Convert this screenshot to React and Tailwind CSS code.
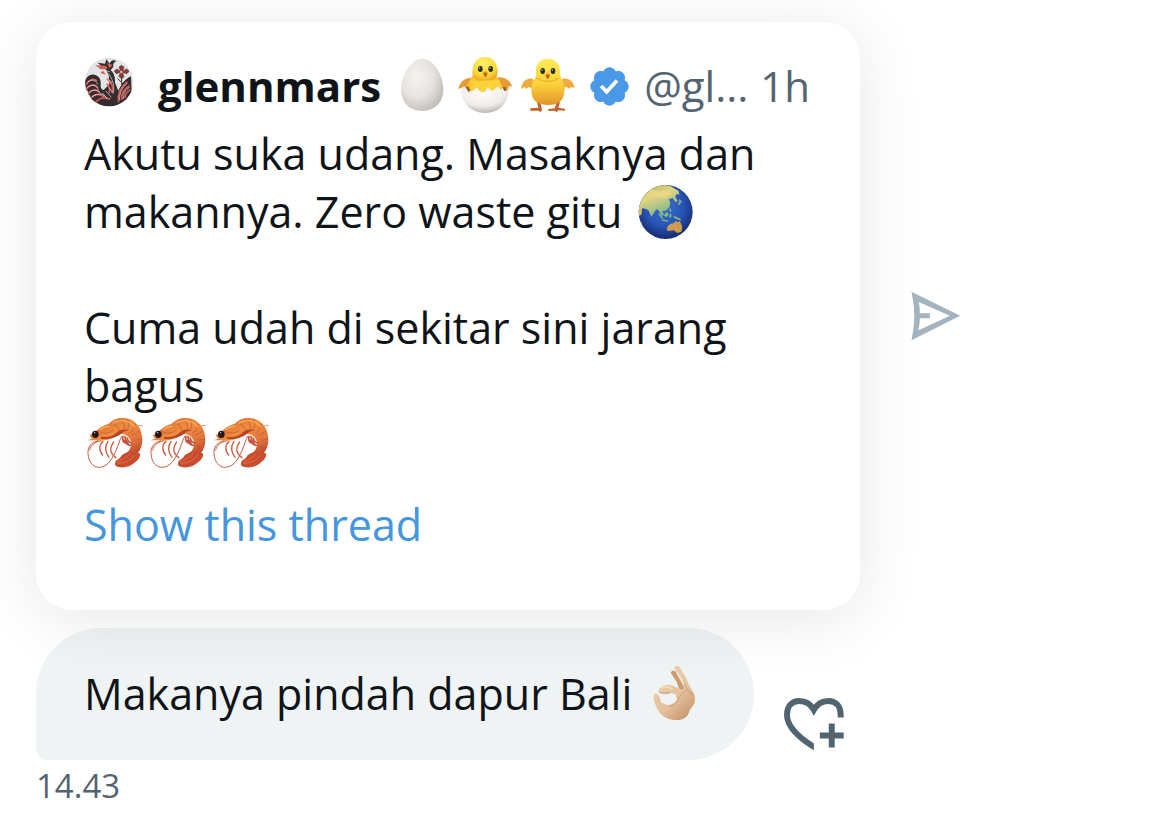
const threadText = [
    'Akutu suka udang. Masaknya dan',
    'makannya. Zero waste gitu',
];

export default function App() {
    return (
        <main className="min-h-screen bg-white px-9 pt-[22px] font-['Open_Sans',sans-serif] text-[43px] leading-[58px] font-medium text-[#0f1419]">
            <div className="flex items-center">
                <QuotedPost />
                <button type="button" aria-label="Send post" className="ml-[51px] shrink-0">
                    <SendIcon />
                </button>
            </div>

            <div className="mt-[18px] flex items-end">
                <p className="rounded-[66px] rounded-bl-xl bg-[#eff3f4] px-12 py-[37px] whitespace-nowrap">
                    Makanya pindah dapur Bali <OkHand />
                </p>
                <button type="button" aria-label="Add reaction" className="mb-2 ml-[30px] shrink-0">
                    <HeartPlusIcon />
                </button>
            </div>
            <time className="block text-[33px] leading-[52px] text-[#536471]">14.43</time>
        </main>
    );
}

function QuotedPost() {
    return (
        <article className="relative w-full max-w-[824px] rounded-[36px] bg-white px-12 pt-[35px] pb-14 shadow-[0_8px_64px_rgba(0,0,0,0.1)]">
            <header className="mb-[10px] flex items-center text-[42px] whitespace-nowrap">
                <Avatar />
                <h2 className="ml-6 font-bold">glennmars</h2>
                <span className="ml-[9px] flex shrink-0">
                    <Egg />
                    <HatchingChick />
                    <Chick />
                </span>
                <VerifiedBadge />
                <span className="ml-3 text-[#536471]">@gl...</span>
                <span className="ml-3 text-[#536471]">1h</span>
            </header>

            <p className="whitespace-nowrap">
                {threadText[0]}
                <br />
                {threadText[1]} <Globe />
            </p>
            <p className="mt-[58px]">
                Cuma udah di sekitar sini jarang
                <br />
                bagus
            </p>
            <p className="flex">
                <Shrimp />
                <Shrimp />
                <Shrimp />
            </p>
            <a href="#thread" className="mt-[23px] block text-[#4596dc]">Show this thread</a>
        </article>
    );
}

function Avatar() {
    return (
        <svg viewBox="43 38 150 150" className="size-[50px] shrink-0 self-start" role="img" aria-label="glennmars avatar">
            <circle cx="118" cy="113" r="73" fill="#e3e5e5" />
            <clipPath id="avatar-clip"><circle cx="118" cy="113" r="73" /></clipPath>
            <g clipPath="url(#avatar-clip)">
                <path d="M48 128c-6-22 6-39 25-37 15 2 22 15 20 30-1 8 2 14 9 16l17-17-2-28-9-17-20-1 9-7-13-12 22 3 4-13 10 13c4-10 11-12 20-8-9 4-10 10-9 18l-8 9c9 8 14 20 13 38l10 24c8-17 21-36 38-43l2 53-34 43-45 2-39-24z" fill="#332d2f" />
                <path d="M76 63l18 11 20-1-5-9zM111 56l9 15 9-9M100 79l-8 7 17 5z" fill="#d8624d" />
                <g fill="none" stroke="#db5a58" strokeWidth="5">
                    <path d="M49 122c8-16 21-22 33-12M48 137c10-16 26-20 37-7M54 151c10-15 23-18 36-7M62 163c11-14 26-17 41-5M77 175c12-15 26-18 45-10" />
                    <path d="M147 174c-5-25 8-47 26-62M157 167c-3-18 7-34 22-43M166 160c0-10 7-18 16-24" />
                    <path d="M112 103c12 10 21 26 15 44M111 118c8 8 11 19 7 28" />
                </g>
                <g fill="none" stroke="#f0e9e5" strokeWidth="2">
                    <path d="M53 115c12-12 25-9 31 5M52 130c13-13 29-9 34 7M57 145c16-13 29-9 38 5M68 157c16-12 32-9 44 4M116 87c12 16 18 34 16 56M106 78l16 5M150 167c-2-20 8-39 23-50M162 164c-2-16 6-28 18-35" />
                    <path d="M98 145l16 20M108 139l17 20M118 129l14 19M115 105l12 10" />
                </g>
                <g fill="#923b3b" stroke="#3b2d2d" strokeWidth="2">
                    <path d="M155 82l-7-13 7-6 8 6-5 13 13-8 7 7-7 7-13-4 5 13-8 6-7-7 5-13-13 5-6-7 7-7z" />
                    <path d="M156 97v24m0-7l-12-11m12 17l14-14" fill="none" strokeWidth="3" />
                </g>
                <circle cx="155" cy="83" r="4" fill="#eeb5a6" />
            </g>
        </svg>
    );
}

function Egg() {
    return (
        <svg viewBox="0 36 189 174" className="h-[58px] w-[63px]" role="img" aria-label="egg">
            <defs>
                <radialGradient id="egg-shade" cx="38%" cy="36%" r="72%">
                    <stop offset="0" stopColor="#f5f3f0" />
                    <stop offset=".55" stopColor="#e5e2df" />
                    <stop offset="1" stopColor="#bdb8b4" />
                </radialGradient>
            </defs>
            <path d="M97 41c35 0 63 52 63 92 0 39-26 65-64 65s-63-26-63-65c0-40 28-92 64-92z" fill="url(#egg-shade)" />
        </svg>
    );
}

function ChickFace({ x, y }) {
    return (
        <g>
            <ellipse cx={x - 14} cy={y} rx="7" ry="9" fill="#282d22" />
            <ellipse cx={x + 17} cy={y} rx="7" ry="9" fill="#282d22" />
            <circle cx={x - 16} cy={y - 3} r="2" fill="#dce3d0" />
            <circle cx={x + 15} cy={y - 3} r="2" fill="#dce3d0" />
            <path d={`M${x - 7} ${y + 12}q8-11 16 0l-6 12h-4z`} fill="#e78b20" />
            <path d={`M${x - 5} ${y + 13}h12l-4 9h-4z`} fill="#b95c0c" />
        </g>
    );
}

function HatchingChick() {
    return (
        <svg viewBox="189 36 189 174" className="h-[58px] w-[63px]" role="img" aria-label="hatching chick">
            <defs>
                <radialGradient id="hatch-head" cx="45%" cy="25%" r="75%">
                    <stop offset="0" stopColor="#fff06b" />
                    <stop offset=".65" stopColor="#fcd936" />
                    <stop offset="1" stopColor="#eba529" />
                </radialGradient>
                <radialGradient id="hatch-shell" cx="45%" cy="25%" r="75%">
                    <stop offset="0" stopColor="#fffefd" />
                    <stop offset=".65" stopColor="#efecea" />
                    <stop offset="1" stopColor="#bcb5b0" />
                </radialGradient>
            </defs>
            <path d="M252 99c-24-3-43 10-47 33l10-4 3 11 17-14 16-2zM322 97c25-1 39 10 44 28l-9-2-3 15-16-10-24-4z" fill="#e89a35" />
            <path d="M248 91h70l20 35-15 34h-79l-17-32z" fill="#f9c831" />
            <path d="M247 82c0-28 14-46 38-46s37 17 38 43c1 21-13 31-38 31-26 0-38-9-38-28z" fill="url(#hatch-head)" />
            <path d="M213 130c7-6 10-7 15-2l7 12 12-2 11-14 11 13 14 5 9-17 15 12 17-15 11 16 13 2 8-13c1 44-25 77-70 77s-73-32-73-74z" fill="url(#hatch-shell)" />
            <path d="M246 108l-4 20 9 7 11-9 8 13 13 3 10-15 14 11 16-15 6 8 5-8-6-18z" fill="#fbd238" />
            <path d="M227 127l8 13 6-2-5-14zM337 126l5 11 7 2-1-12z" fill="#8f6428" />
            <ChickFace x={285} y={72} />
        </svg>
    );
}

function Chick() {
    return (
        <svg viewBox="378 36 189 174" className="h-[58px] w-[63px]" role="img" aria-label="baby chick">
            <defs>
                <linearGradient id="chick-body" x1="0" y1="0" x2="0" y2="1">
                    <stop offset="0" stopColor="#ffec57" />
                    <stop offset=".55" stopColor="#fbd13b" />
                    <stop offset="1" stopColor="#e2952b" />
                </linearGradient>
            </defs>
            <path d="M441 170l4 18-24 2v7h24l6 4 5-5-5-26zM501 170l-7 20-19 2v6l18-1 7 4 5-5 20 1v-6l-20-3 5-18z" fill="#c5622a" />
            <path d="M428 101c-20-2-32 9-35 31l11-6 5 5 7-5 10 4 20-5zM518 101c21-3 32 9 36 28l-11-3-5 5-10-6-9 6-20-4z" fill="#efaa3b" />
            <path d="M438 85c-3-28 12-44 36-44 25 0 38 19 36 44l3 15c10 13 12 28 10 41-2 27-18 39-49 39s-49-13-50-41c-1-17 3-30 12-40z" fill="url(#chick-body)" />
            <path d="M440 99q34 21 68 0" fill="none" stroke="#ecb02c" strokeWidth="4" />
            <ChickFace x={472} y={78} />
        </svg>
    );
}

function VerifiedBadge() {
    return (
        <svg viewBox="0 0 22 22" className="ml-2 size-[45px] shrink-0" role="img" aria-label="Verified account">
            <path fill="#4a99e9" d="M20.396 11c-.018-.646-.215-1.275-.57-1.816-.354-.54-.852-.972-1.438-1.246.223-.607.27-1.264.14-1.897-.131-.634-.437-1.218-.882-1.687-.47-.445-1.053-.75-1.687-.882-.633-.13-1.29-.083-1.897.14-.273-.587-.704-1.086-1.245-1.44S11.647 1.62 11 1.604c-.646.017-1.273.213-1.813.568s-.969.854-1.24 1.44c-.608-.223-1.267-.272-1.902-.14-.635.13-1.22.436-1.69.882-.445.47-.749 1.055-.878 1.688-.13.633-.08 1.29.144 1.896-.587.274-1.087.705-1.443 1.245-.356.54-.555 1.17-.574 1.817.02.647.218 1.276.574 1.817.356.54.856.972 1.443 1.245-.224.606-.274 1.263-.144 1.896.13.634.433 1.218.877 1.688.47.443 1.054.747 1.687.878.633.132 1.29.084 1.897-.136.274.586.705 1.084 1.246 1.439.54.354 1.17.551 1.816.569.647-.016 1.276-.213 1.817-.567s.972-.854 1.245-1.44c.604.239 1.266.296 1.903.164.636-.132 1.22-.447 1.68-.907.46-.46.776-1.044.908-1.681s.075-1.299-.165-1.903c.586-.274 1.084-.705 1.439-1.246.354-.54.551-1.17.569-1.816z" />
            <path fill="#fff" d="M9.662 14.85l-3.429-3.428 1.293-1.302 2.072 2.072 4.4-4.794 1.347 1.246z" />
        </svg>
    );
}

function Globe() {
    return (
        <svg viewBox="24 21 189 174" className="inline-block h-[58px] w-[63px] align-top" role="img" aria-label="globe">
            <defs>
                <radialGradient id="globe-sea" cx="48%" cy="40%" r="58%">
                    <stop offset="0" stopColor="#386fd0" />
                    <stop offset=".6" stopColor="#2855b6" />
                    <stop offset="1" stopColor="#182d76" />
                </radialGradient>
                <linearGradient id="globe-land" x1="0" y1="0" x2=".5" y2="1">
                    <stop offset="0" stopColor="#a8b36a" />
                    <stop offset=".45" stopColor="#e1d481" />
                    <stop offset="1" stopColor="#7bb68c" />
                </linearGradient>
                <clipPath id="globe-clip"><circle cx="119" cy="108" r="81" /></clipPath>
            </defs>
            <circle cx="119" cy="108" r="81" fill="url(#globe-sea)" />
            <g clipPath="url(#globe-clip)">
                <path d="M38 98l7-29 25-30 39-13 24 4 25 15 2 12-8-4-4 10 8 13-8 2-8-12-12 4 5 9-3 15-11 10-10 1 5 12-7 3-9-17-7-3-15 22-9-20-17-6-6 12-9 3z" fill="url(#globe-land)" />
                <path d="M58 61l17-20 27 6 24-4 15 12-22 11-32-2z" fill="#f1d783" opacity=".7" />
                <path d="M38 103l10-2-1 14-8 5zM40 133l8 8-1 9z" fill="#d2bc67" />
                <path d="M99 111l13 16-4 2-11-14zM116 113l9-5 3 9-7 6-7-4zM131 113l6 2-2 10-5-3zM143 119l20 9 2 6-21-8zM108 130l19 4-1 3-17-3zM132 96l5 9-3 3-5-7z" fill="#87ba7d" />
                <path d="M125 151l8-8 10-1 6-7 8 4 4-5 8 19-3 14-12 4-11-8-15 2-6-4z" fill="#cf9b50" />
                <path d="M159 69l8 7-7 10-5 1 5-9z" fill="#9eb989" />
                <path d="M38 113c4 38 27 67 74 76-44 10-82-30-74-76z" fill="#203b8b" opacity=".35" />
            </g>
        </svg>
    );
}

function Shrimp() {
    return (
        <svg viewBox="27 30 189 174" className="h-[58px] w-[63px]" role="img" aria-label="shrimp">
            <defs>
                <linearGradient id="shrimp-body" x1="0" y1="0" x2=".7" y2="1">
                    <stop offset="0" stopColor="#d45d2c" />
                    <stop offset=".45" stopColor="#ef8c3f" />
                    <stop offset=".75" stopColor="#e2763d" />
                    <stop offset="1" stopColor="#bc442c" />
                </linearGradient>
            </defs>
            <g fill="none" stroke="#cc5b42" strokeWidth="3" strokeLinecap="round">
                <path d="M68 108c-20 5-30 17-29 37 1 25 15 43 35 42 23-2 36-22 49-50 8-19 12-35 17-43M76 108c-18 3-28 12-32 27" />
                <path d="M84 110c-12 8-13 27-1 40M99 109c-9 13-12 28 3 48M116 111c-13 18-12 34 7 47" strokeWidth="4" />
                <path d="M183 67c7-5 12-7 19-5" strokeWidth="2" />
            </g>
            <path d="M38 106l13-5-7-10 14-7c12-15 26-22 43-28 14-14 31-20 51-16 31 4 50 31 50 65 0 30-19 54-49 61-8-3-12-8-14-14 16-5 24-14 28-27 3-14-1-24-10-32-9-7-19-8-29-4-17 13-38 18-57 18-12 0-21-2-33-1z" fill="url(#shrimp-body)" />
            <g fill="none" stroke="#c94f35" strokeWidth="5" strokeLinecap="round">
                <path d="M144 94c-2 9-1 15 5 19M150 95c1 11 3 16 10 22M157 99c1 9 5 13 13 15M149 107c2 7 8 12 17 14" />
            </g>
            <path d="M78 101c25 3 46-3 60-15 8-7 16-10 24-8-17-9-30-3-41 8-13 10-25 11-43 9z" fill="#b84427" />
            <path d="M71 79c13 8 31 7 43-3M111 52c15 8 23 18 21 32M132 43c14 7 18 19 16 33M156 41c7 12 7 22-1 36M181 56c-2 14-8 23-18 29M195 76c-8 9-15 13-25 14M201 102c-12 3-18 4-26 2M195 130c-10-1-16-4-22-9M180 149c-7-4-12-7-15-13" fill="none" stroke="#bd552d" strokeWidth="2" />
            <path d="M112 55c23-14 52-10 68 11M74 75c10-8 18-11 29-12" fill="none" stroke="#f6ad5d" strokeWidth="4" />
            <path d="M170 141c-15-1-28 5-35 17l-13 10c-4 10-2 16 6 17 18 6 39 0 53-14 10-7 14-15 15-25-9-5-16-6-26-5z" fill="#c94c2f" />
            <path d="M127 175c22 0 40-9 53-25M128 170c17-6 27-13 38-24" fill="none" stroke="#e97c4f" strokeWidth="2" />
            <ellipse cx="61" cy="88" rx="10" ry="11" fill="#251610" />
            <circle cx="59" cy="83" r="2" fill="#eee0cf" />
        </svg>
    );
}

function OkHand() {
    return (
        <svg viewBox="0 30 189 174" className="inline-block h-[58px] w-[63px] align-top" role="img" aria-label="OK hand">
            <defs>
                <linearGradient id="hand-skin" x1="0" y1="0" x2=".7" y2="1">
                    <stop offset="0" stopColor="#f0d5b3" />
                    <stop offset=".65" stopColor="#e4c29d" />
                    <stop offset="1" stopColor="#c99a72" />
                </linearGradient>
            </defs>
            <path d="M84 55c-2-9 11-10 15-3l18 31 11 24-17 2-11-30z" fill="#c99b70" />
            <path d="M95 42c-3-11 11-12 16-4l18 30c6 14 9 24 16 34 10 14 13 27 10 40-5 14-14 18-18 33-7 15-20 22-39 20-29-2-49-15-58-40-7-14-10-25-7-36 4-7 14-3 17 8l5 16 19 7c13 0 23-8 29-17l-4-14-14-5c-13 6-26 5-36-1-5-8 1-16 11-20 14-6 27-4 38 3l20 9 7-9-8-25z" fill="url(#hand-skin)" />
            <path d="M48 112c13 4 21 3 32-1M100 124l7 7c-6 13-17 22-30 23M123 86l11 19c7 8 13 12 19 14M132 106c-10 4-20 11-23 22" fill="none" stroke="#bd8d63" strokeWidth="2" />
            <path d="M104 57l16 30M52 99c15-6 27-4 38 4" fill="none" stroke="#f5dfc2" strokeWidth="4" />
        </svg>
    );
}

function SendIcon() {
    return (
        <svg viewBox="34 33 149 150" className="size-[50px]" fill="#a3b4c0" aria-hidden="true">
            <path fillRule="evenodd" d="M35 35l146 72-146 74q17-73 0-146zM57 66q3 17 3 34h30v15H60q0 18-4 36l94-44z" />
        </svg>
    );
}

function HeartPlusIcon() {
    return (
        <svg viewBox="39 38 184 164" className="h-[55px] w-[61px]" fill="none" stroke="#536471" strokeWidth="18" aria-hidden="true">
            <clipPath id="heart-clip"><path d="M30 30h200v69H129v110H30z" /></clipPath>
            <path clipPath="url(#heart-clip)" d="M145 197C78 158 48 125 48 91c0-25 14-42 37-42 19 0 34 9 44 27 10-18 25-27 44-27 23 0 37 17 37 42v12" />
            <path d="M183 117v72M147 153h72" />
        </svg>
    );
}
